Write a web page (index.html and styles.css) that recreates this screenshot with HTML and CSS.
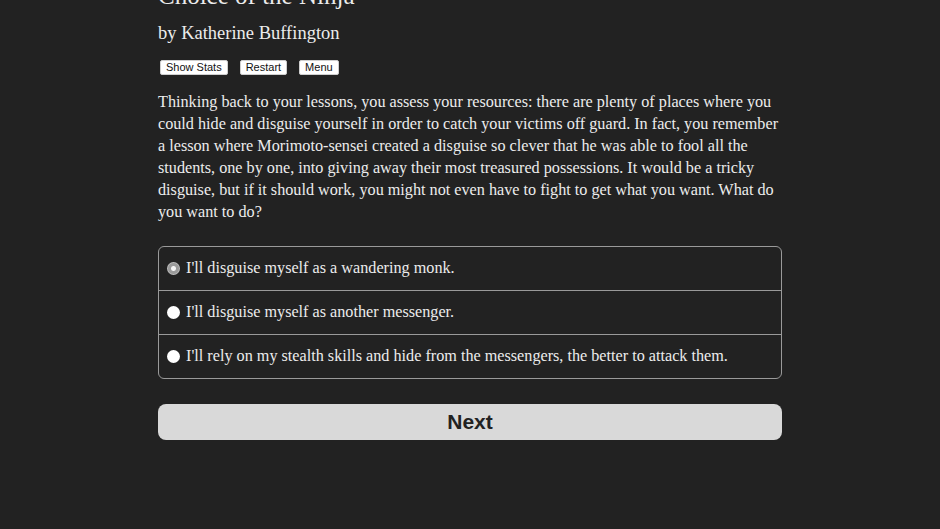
FILE: index.html
```html
<!DOCTYPE html>
<html>
<head>
<meta charset="utf-8">
<link rel="stylesheet" href="styles.css">
</head>
<body>
<div class="page">
  <h1 class="title">Choice of the Ninja</h1>
  <h2 class="author">by Katherine Buffington</h2>
  <div class="toolbar">
    <button class="tbtn">Show Stats</button>
    <button class="tbtn">Restart</button>
    <button class="tbtn">Menu</button>
  </div>
  <p class="story">Thinking back to your lessons, you assess your resources: there are plenty of places where you could hide and disguise yourself in order to catch your victims off guard. In fact, you remember a lesson where Morimoto-sensei created a disguise so clever that he was able to fool all the students, one by one, into giving away their most treasured possessions. It would be a tricky disguise, but if it should work, you might not even have to fight to get what you want. What do you want to do?</p>
  <div class="choices">
    <label class="choice"><span class="radio checked"></span><span>I'll disguise myself as a wandering monk.</span></label>
    <label class="choice"><span class="radio"></span><span>I'll disguise myself as another messenger.</span></label>
    <label class="choice"><span class="radio"></span><span>I'll rely on my stealth skills and hide from the messengers, the better to attack them.</span></label>
  </div>
  <button class="next">Next</button>
</div>
</body>
</html>
```
FILE: styles.css
```css
html, body {
  margin: 0;
  padding: 0;
  background: #222222;
  height: 100%;
}
body {
  font-family: "Liberation Serif", "DejaVu Serif", serif;
  color: #ececec;
}
.page {
  width: 624px;
  margin: 0 0 0 158px;
  display: flex;
  flex-direction: column;
}
.title {
  font-size: 25px;
  font-weight: normal;
  margin: -19px 0 0 0;
  line-height: 30px;
  height: 29px;
}
.author {
  font-size: 18.5px;
  font-weight: normal;
  margin: 12px 0 0 0;
  line-height: 22px;
}
.toolbar {
  display: flex;
  gap: 12px;
  margin: 16px 0 0 2px;
}
.tbtn {
  font-family: "Liberation Sans", Arial, sans-serif;
  font-size: 11px;
  background: #ffffff;
  color: #111;
  border: 1px solid #cfcfcf;
  border-radius: 2px;
  height: 15px;
  line-height: 13px;
  padding: 0 5px;
}
.story {
  font-size: 16.2px;
  line-height: 22px;
  margin: 16px 0 0 0;
}
.choices {
  margin-top: 23px;
  border: 1px solid #9a9a9a;
  border-radius: 6px;
  display: flex;
  flex-direction: column;
}
.choice {
  display: flex;
  align-items: center;
  height: 43px;
  padding-left: 8px;
  font-size: 16.2px;
  border-top: 1px solid #9a9a9a;
}
.choice:first-child {
  border-top: none;
}
.radio {
  width: 13px;
  height: 13px;
  border-radius: 50%;
  background: #ffffff;
  margin-right: 6px;
  flex: none;
}
.radio.checked {
  background: radial-gradient(circle, #f4f4f4 0 2px, #9a9a9a 3px 5px, #bdbdbd 6px);
}
.next {
  margin-top: 25px;
  height: 36px;
  background: #d9d9d9;
  border: none;
  border-radius: 8px;
  font-family: "Liberation Sans", Arial, sans-serif;
  font-weight: bold;
  font-size: 21px;
  color: #222;
  padding: 0;
}
```
